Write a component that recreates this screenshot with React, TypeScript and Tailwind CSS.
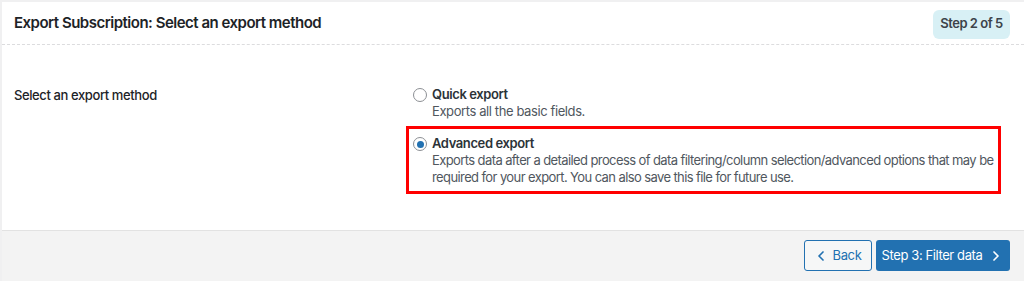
import { ChevronLeft, ChevronRight } from "lucide-react";

function Radio({ checked }: { checked?: boolean }) {
  return (
    <span className="mt-[2px] flex h-[14px] w-[14px] shrink-0 items-center justify-center rounded-full border border-[#8c8f94] bg-white">
      {checked ? <span className="h-[7px] w-[7px] rounded-full bg-[#2271b1]" /> : null}
    </span>
  );
}

export default function App() {
  return (
    <div
      className="h-[281px] w-[1024px] overflow-hidden bg-[#f0f0f1] pl-[2px] pt-[2px] text-[13px] tracking-[-0.4px] text-[#1d2327]"
      style={{ fontFamily: "Inter, 'Noto Sans', sans-serif" }}
    >
      <div className="flex h-[290px] flex-col bg-white">
        <div className="flex h-[43px] items-center justify-between border-b border-dashed border-[#dcdcde] pl-[12px] pr-[14px]">
          <div className="text-[15px] font-semibold tracking-[-0.5px]">Export Subscription: Select an export method</div>
          <div className="mt-[2px] flex h-[29px] w-[77px] items-center justify-center rounded-[6px] bg-[#d8f0f5] text-[13px] font-semibold tracking-[-0.5px] text-[#3c434a]">
            Step 2 of 5
          </div>
        </div>

        <div className="flex h-[185px] pt-[41px]">
          <div className="w-[404px] pl-[12px] font-medium">Select an export method</div>
          <div className="flex flex-col">
            <div className="flex gap-[5px] pl-[7px] leading-[17px]">
              <Radio />
              <div>
                <div className="font-semibold text-[#2c3338]">Quick export</div>
                <div className="text-[#50575e]">Exports all the basic fields.</div>
              </div>
            </div>
            <div className="mt-[6px] flex w-[595px] gap-[5px] border-[3px] border-[#ff0000] px-[4px] pb-[5px] pt-[6px] leading-[17px]">
              <Radio checked />
              <div>
                <div className="font-semibold text-[#2c3338]">Advanced export</div>
                <div className="tracking-[-0.6px] text-[#50575e]">
                  Exports data after a detailed process of data filtering/column selection/advanced options that may be
                  required for your export. You can also save this file for future use.
                </div>
              </div>
            </div>
          </div>
        </div>

        <div className="flex flex-1 justify-end gap-[4px] border-t border-[#e2e2e2] bg-[#f3f3f3] pr-[14px] pt-[9px]">
          <button className="flex h-[31px] w-[68px] items-center justify-center gap-[4px] rounded-[3px] border border-[#2271b1] bg-[#f6f7f7] pr-[2px] text-[13px] text-[#2271b1]">
            <ChevronLeft className="h-[16px] w-[16px]" strokeWidth={2.5} />
            Back
          </button>
          <button className="flex h-[31px] w-[134px] items-center justify-center gap-[6px] rounded-[3px] bg-[#2271b1] text-[13px] text-white">
            Step 3: Filter data
            <ChevronRight className="h-[16px] w-[16px]" strokeWidth={2.5} />
          </button>
        </div>
      </div>
    </div>
  );
}
